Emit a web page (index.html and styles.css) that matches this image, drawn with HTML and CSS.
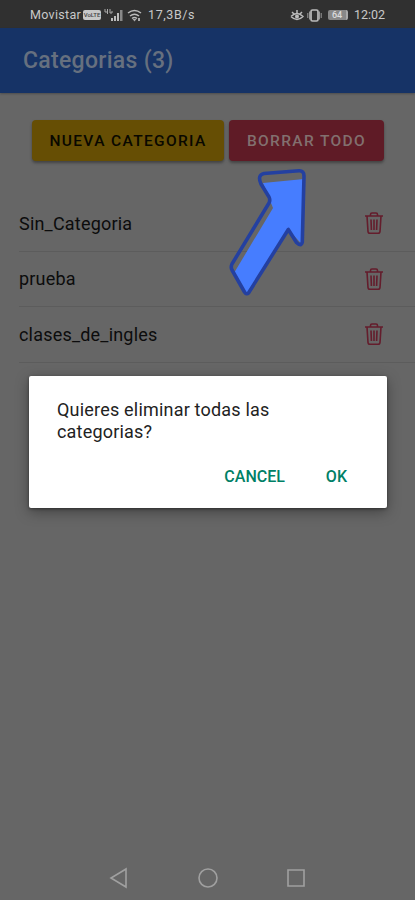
FILE: index.html
```html
<!DOCTYPE html>
<html lang="es">
<head>
    <meta charset="UTF-8">
    <meta name="viewport" content="width=device-width, initial-scale=1">
    <title>Categorias</title>
    <link rel="stylesheet" href="styles.css">
</head>
<body>
    <svg class="symbols">
        <symbol id="trash" viewBox="0 0 20 24">
            <path d="M1 5h18M6.500 5V3.500Q6.500 2 8 2h4Q13.500 2 13.500 3.500V5M3 5l1 15.500Q4.100 22.300 6 22.300h8Q15.900 22.300 16 20.500L17 5M7 8.500l.4 10.500M10 8.500V19M13 8.500L12.600 19" />
        </symbol>
    </svg>

    <div class="status">
        <span class="carrier">Movistar</span>
        <span class="volte">VoLTE</span>
        <svg class="signal" width="20" height="14" viewBox="0 0 20 14">
            <path d="M1 1v3h3M3.500 1v5M6 1v4h2V3" fill="none" stroke="#aaa" />
            <path d="M7 10h2v3H7zM10 8h2v5h-2zM13 5h2v8h-2z" fill="#bbb" />
            <path d="M16 2h2.500v11H16z" fill="#888" />
        </svg>
        <svg class="wifi" width="15" height="13" viewBox="0 0 15 13">
            <path d="M1 4q6.500-5 13 0M3 7q4.500-3.500 9 0M5 9.500q2.500-2 5 0" fill="none" stroke="#bbb" stroke-width="1.500" />
            <path d="M5.500 10h4l-2 2.500zM11 9h2v3h-2z" fill="#aaa" />
        </svg>
        <span class="speed">17,3B/s</span>
        <svg class="eye" width="14" height="13" viewBox="0 0 14 13">
            <path d="M1 7.500q6-6 12 0q-6 6-12 0M2 3l2 2M7 1v3M12 3l-2 2" fill="none" stroke="#bbb" stroke-width="1.500" />
            <circle cx="7" cy="7.500" r="2" fill="#bbb" />
        </svg>
        <svg class="vibrate" width="15" height="13" viewBox="0 0 15 13">
            <rect x="4" y="1" width="7" height="11" rx="1.500" fill="none" stroke="#bbb" stroke-width="1.700" />
            <path d="M.8 4v5M2.500 2.500v8M12.500 2.500v8M14.200 4v5" stroke="#999" />
        </svg>
        <span class="battery">64</span>
        <span class="clock">12:02</span>
    </div>

    <header class="toolbar">Categorias (3)</header>

    <main class="content">
        <div class="actions">
            <button class="button new">NUEVA CATEGORIA</button>
            <button class="button delete">BORRAR TODO</button>
        </div>
        <ul class="list">
            <li class="item"><span>Sin_Categoria</span><svg class="trash"><use href="#trash" /></svg></li>
            <li class="item"><span>prueba</span><svg class="trash"><use href="#trash" /></svg></li>
            <li class="item"><span>clases_de_ingles</span><svg class="trash"><use href="#trash" /></svg></li>
        </ul>
    </main>

    <svg class="arrow" width="84" height="132" viewBox="0 0 84 132">
        <path class="arrow-fill" d="M36 15L77 11L75.500 77L61.300 61.500L19.500 126L7 105L46 40Z" />
        <path class="arrow-line" d="M37 5.500L72 2.700Q77 2.500 77 8L75.300 74Q74 79 69.500 74.500L61.300 61.500L21.500 125Q19.500 127 17.500 124L5 102Q3.500 99 5 96L42 35Q43.500 32 42 29L34 16Q30 7 37 5.500Z" />
    </svg>

    <div class="dialog">
        <p class="message">Quieres eliminar todas las<br>categorias?</p>
        <div class="dialog-buttons">
            <button class="dialog-button">CANCEL</button>
            <button class="dialog-button">OK</button>
        </div>
    </div>

    <nav class="navbar">
        <svg width="20" height="22" viewBox="0 0 20 22"><path d="M17 2v18L2 11z" /></svg>
        <svg width="22" height="22" viewBox="0 0 22 22"><circle cx="11" cy="11" r="9" /></svg>
        <svg width="20" height="22" viewBox="0 0 20 22"><path d="M2 3h16v16H2z" /></svg>
    </nav>
</body>
</html>
```

FILE: styles.css
```css
* {
    box-sizing: border-box;
}
body {
    margin: 0;
    height: 900px;
    display: flex;
    flex-direction: column;
    background-color: #666;
    font-family: Roboto, sans-serif;
    position: relative;
    overflow: hidden;
}
button {
    font-family: inherit;
    border: none;
    padding: 0;
    white-space: nowrap;
}
.symbols {
    position: absolute;
    width: 0;
    height: 0;
}
.status {
    height: 28px;
    padding: 2px 29px 0 30px;
    background-color: #303030;
    color: #c8c8c8;
    display: flex;
    align-items: center;
    font-size: 12.5px;
    font-weight: 400;
    line-height: 14px;
}
.carrier {
    width: 53px;
    letter-spacing: 0.3px;
}
.volte {
    width: 18px;
    height: 10px;
    border-radius: 2px;
    background-color: #c8c8c8;
    color: #444;
    font-size: 6px;
    font-weight: 500;
    line-height: 10px;
    text-align: center;
}
.signal {
    margin-left: 3px;
}
.wifi {
    margin-left: 3px;
}
.speed {
    margin-left: 6px;
    letter-spacing: 0.6px;
}
.eye {
    margin-left: auto;
}
.vibrate {
    margin-left: 3px;
}
.battery {
    width: 20px;
    height: 10px;
    margin: 0 6px 0 6px;
    border-radius: 2px;
    background-color: #888;
    border-right: 2px solid #aaa;
    color: #ddd;
    font-size: 9px;
    font-weight: 500;
    line-height: 10px;
    text-align: center;
}
.clock {
    width: 32px;
}
.toolbar {
    height: 65px;
    padding-left: 23px;
    background-color: #163366;
    color: #66707f;
    font-size: 23px;
    font-weight: 500;
    line-height: 66px;
    letter-spacing: 0.3px;
    box-shadow: 0 1px 2px rgba(0, 0, 0, 0.25);
}
.content {
    flex: 1;
    padding-top: 27px;
}
.actions {
    display: flex;
    gap: 5px;
    padding-left: 32px;
}
.button {
    height: 41px;
    border-radius: 4px;
    font-size: 15.5px;
    font-weight: 500;
    letter-spacing: 1.35px;
    box-shadow: 0 2px 3px rgba(0, 0, 0, 0.35);
}
.new {
    width: 192px;
    background-color: #664e04;
    color: #090800;
}
.delete {
    width: 155px;
    background-color: #5f1b26;
    color: #82706f;
}
.list {
    list-style: none;
    margin: 35px 0 0;
    padding: 0 0 0 19px;
}
.item {
    height: 55.5px;
    display: flex;
    align-items: center;
    justify-content: space-between;
    padding-right: 31px;
    border-bottom: 1px solid #5c5c5c;
    color: #0c0c0c;
    font-size: 18px;
    letter-spacing: 0.2px;
}
.trash {
    width: 20px;
    height: 24px;
    fill: none;
    stroke: #641d2c;
    stroke-width: 1.6;
}
.arrow {
    position: absolute;
    left: 227px;
    top: 168px;
}
.arrow-fill {
    fill: #467dff;
}
.arrow-line {
    fill: none;
    stroke: #2440a0;
    stroke-width: 3.6;
    stroke-linejoin: round;
}
.dialog {
    position: absolute;
    left: 29px;
    top: 376px;
    width: 358px;
    height: 132px;
    padding: 23px 40px 0 28px;
    border-radius: 2px;
    background-color: #fff;
    box-shadow: 0 4px 14px rgba(0, 0, 0, 0.35), 0 1px 3px rgba(0, 0, 0, 0.4);
}
.message {
    margin: 0;
    color: #222;
    font-size: 18px;
    line-height: 22px;
    letter-spacing: 0.2px;
}
.dialog-buttons {
    display: flex;
    justify-content: flex-end;
    gap: 41px;
    margin-top: 24px;
}
.dialog-button {
    background: none;
    color: #008066;
    font-size: 16px;
    font-weight: 500;
    line-height: 20px;
}
.navbar {
    height: 44px;
    padding: 0 109px 0 109px;
    display: flex;
    align-items: center;
    justify-content: space-between;
}
.navbar svg {
    fill: none;
    stroke: #a0a0a0;
    stroke-width: 1.6;
}
```
